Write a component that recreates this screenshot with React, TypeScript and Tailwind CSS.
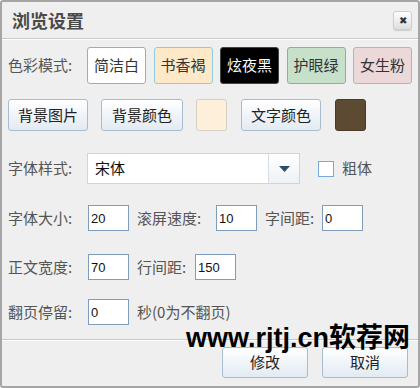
import { useState } from "react";

const font = { fontFamily: '"Noto Sans CJK SC", "Liberation Sans", sans-serif' };

const modes = [
  { label: "简洁白", cls: "bg-white border-[#a9a9a9] text-[#333]" },
  { label: "书香褐", cls: "bg-[#fde8c8] border-[#8ecbea] text-[#333]" },
  { label: "炫夜黑", cls: "bg-black border-[#444] text-white" },
  { label: "护眼绿", cls: "bg-[#c7e0ca] border-[#a3a3a3] text-[#333]" },
  { label: "女生粉", cls: "bg-[#ecd7d9] border-[#b5b5b5] text-[#333]" },
];

function GradButton({ children, className }: { children: React.ReactNode; className: string }) {
  return (
    <button
      className={`rounded-[3px] border border-[#a9bccf] bg-gradient-to-b from-white to-[#e2eaf2] text-[15px] text-[#222] shadow-[inset_0_1px_0_#fff] ${className}`}
    >
      {children}
    </button>
  );
}

function Field({ label, value, labelW }: { label: string; value: string; labelW: string }) {
  return (
    <div className="flex items-center">
      <span className={`${labelW} text-[15px] text-[#555]`}>{label}</span>
      <input
        readOnly
        value={value}
        className="h-[26px] w-[41px] border border-[#7f9db9] bg-white px-[2px] text-[13px] text-[#111] outline-none"
        style={{ fontFamily: '"Liberation Sans", sans-serif' }}
      />
    </div>
  );
}

export default function App() {
  const [bold, setBold] = useState(false);

  return (
    <div
      className="relative h-[388px] w-[420px] overflow-hidden rounded-[3px] border-2 border-[#a5a5a5] bg-[#efefef]"
      style={font}
    >
      {/* title bar */}
      <div className="flex h-[36px] items-center justify-between pl-[10px] pr-[6px]">
        <h1 className="text-[18px] font-bold text-[#4a4a4a]">浏览设置</h1>
        <button className="flex h-[19px] w-[19px] items-center justify-center rounded-[3px] border border-[#cfcfcf] bg-gradient-to-b from-white to-[#dedede] text-[10px] leading-none text-[#333] shadow-[0_1px_1px_rgba(0,0,0,0.15)]">
          ✖
        </button>
      </div>
      <div className="h-px bg-[#c9c9c9]" />
      <div className="h-px bg-white" />

      <div className="px-[6px]">
        {/* color mode */}
        <div className="mt-[7px] flex items-center">
          <span className="w-[79px] text-[15px] text-[#555]">色彩模式:</span>
          <div className="flex gap-[7.5px]">
            {modes.map((m) => (
              <button
                key={m.label}
                className={`h-[37px] w-[59px] rounded-[3px] border text-[15px] ${m.cls}`}
              >
                {m.label}
              </button>
            ))}
          </div>
        </div>

        {/* colors */}
        <div className="mt-[15px] flex h-[32px] items-stretch">
          <GradButton className="w-[80px]">背景图片</GradButton>
          <GradButton className="ml-[13px] w-[82px]">背景颜色</GradButton>
          <div className="ml-[13px] w-[31px] rounded-[3px] border border-[#d6d0c4] bg-[#fdefd9]" />
          <GradButton className="ml-[14px] w-[80px]">文字颜色</GradButton>
          <div className="ml-[14px] w-[31px] rounded-[3px] border border-[#4a3a27] bg-[#5d4a33]" />
        </div>

        {/* font style */}
        <div className="mt-[22px] flex items-center">
          <span className="w-[79px] text-[15px] text-[#555]">字体样式:</span>
          <div className="flex h-[31px] w-[213px] border border-[#c7d6e2] bg-white">
            <span className="flex flex-1 items-center pl-[7px] text-[15px] text-[#111]">宋体</span>
            <span className="flex w-[31px] items-center justify-center border-l border-[#d5dee6] bg-gradient-to-b from-white to-[#eef2f5]">
              <svg width="11" height="6" viewBox="0 0 11 6">
                <path d="M0 0h11L5.5 6z" fill="#2b4d6b" />
              </svg>
            </span>
          </div>
          <button
            onClick={() => setBold(!bold)}
            className="ml-[18px] h-[16px] w-[16px] border border-[#7aa9d3] bg-white"
          />
          <span className="ml-[8px] text-[15px] text-[#555]">粗体</span>
        </div>

        {/* sizes */}
        <div className="mt-[21px] flex items-center">
          <Field label="字体大小:" value="20" labelW="w-[80px]" />
          <div className="ml-[8px]">
            <Field label="滚屏速度:" value="10" labelW="w-[79px]" />
          </div>
          <div className="ml-[8px]">
            <Field label="字间距:" value="0" labelW="w-[57px]" />
          </div>
        </div>

        <div className="mt-[23px] flex items-center">
          <Field label="正文宽度:" value="70" labelW="w-[80px]" />
          <div className="ml-[8px]">
            <Field label="行间距:" value="150" labelW="w-[58px]" />
          </div>
        </div>

        <div className="mt-[19px] flex items-center">
          <Field label="翻页停留:" value="0" labelW="w-[80px]" />
          <span className="ml-[8px] text-[15px] text-[#555]">秒(0为不翻页)</span>
        </div>
      </div>

      {/* footer */}
      <div className="mt-[14px] h-px bg-[#c9c9c9]" />
      <div className="h-px bg-white" />
      <div className="mt-[6px] flex justify-end gap-[14px] pr-[10px]">
        <GradButton className="h-[31px] w-[86px]">修改</GradButton>
        <GradButton className="h-[31px] w-[86px]">取消</GradButton>
      </div>

      {/* watermark */}
      <div
        className="pointer-events-none absolute left-[184px] top-[323px] whitespace-nowrap text-[27px] font-bold leading-none text-black"
        style={{ fontFamily: '"Liberation Sans", "Noto Sans CJK SC", sans-serif' }}
      >
        www.rjtj.cn软荐网
      </div>
    </div>
  );
}
